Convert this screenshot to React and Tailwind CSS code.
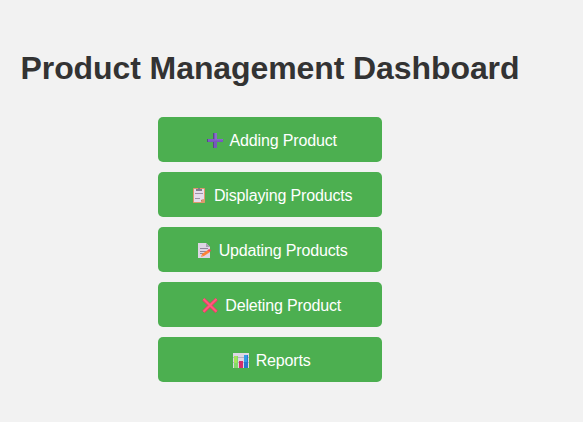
function PlusIcon() {
  return (
    <svg className="h-[15px] w-4" viewBox="0 0 16 15">
      <path d="M6 0h4v6h6v3h-6v6H6V9H0V6h6z" fill="#7659bb" />
      <path d="M8 0h2v6h6v1H8z" fill="#8a6bcb" />
      <path d="M6 0h1v6H6zM0 6h1v3H0zM6 9h1v6H6z" fill="#564b82" />
      <path d="M1 7h14" stroke="#8760cf" />
    </svg>
  );
}

function ClipboardIcon() {
  return (
    <svg className="h-[15px] w-4" viewBox="0 0 16 15">
      <rect x="2" width="12" height="15" rx=".7" fill="#df986b" />
      <path d="M3 1h10v10l-3 3H3z" fill="#e5dcec" />
      <path d="M5 1h2V0h2v1h2v2H5z" fill="#837a8c" />
      <path d="M4 5.5h8M4 10.5h5" stroke="#9b91a6" />
      <path d="M10 14v-2l3-1z" fill="#c77750" />
    </svg>
  );
}

function MemoIcon() {
  return (
    <svg className="h-[15px] w-4" viewBox="0 0 16 15">
      <path d="M2 0h8l4 4v11H2z" fill="#dfd5e5" />
      <path d="M10 0v4h4z" fill="#aaa0b3" />
      <path d="M4 5.5h8M4 8.5h7M4 10.5h4" stroke="#90869b" />
      <path d="M5 14l1-3 6-4 2 2-6 4z" fill="#ff8235" />
      <path d="M11.5 7.5L13 6l2 1-1 2z" fill="#f64459" />
      <path d="M5 14l1-2 1 1z" fill="#e6b38d" />
    </svg>
  );
}

function CrossIcon() {
  return (
    <svg className="h-[15px] w-4" viewBox="0 0 16 15">
      <path d="M1.5 1.2l13 12.6M14.5 1.2l-13 12.6" stroke="#f03a62" strokeWidth="3.4" />
      <path d="M1.5 1l13 12.6M14.5 1l-13 12.6" stroke="#ff5c82" strokeWidth="1.8" />
    </svg>
  );
}

function ChartIcon() {
  return (
    <svg className="h-[15px] w-4" viewBox="0 0 16 15">
      <path d="M0 0h16v15H0z" fill="#ded7e5" />
      <path d="M0 4.5h16M0 9.5h16" stroke="#b9afc4" />
      <path d="M1 3h4v12H1z" fill="#83d969" />
      <path d="M1 3h3v7H1z" fill="#a4e55c" />
      <path d="M6 8h4v7H6z" fill="#d52d6b" />
      <path d="M11 2h4v13h-4z" fill="#2876cf" />
      <path d="M11 2h3v7h-3z" fill="#329ce8" />
    </svg>
  );
}

const items = [
  { label: 'Adding Product', Icon: PlusIcon },
  { label: 'Displaying Products', Icon: ClipboardIcon },
  { label: 'Updating Products', Icon: MemoIcon },
  { label: 'Deleting Product', Icon: CrossIcon },
  { label: 'Reports', Icon: ChartIcon },
];

export default function App() {
  return (
    <div className="h-[422px] w-[583px] overflow-hidden bg-[#f2f2f2] font-['Liberation_Sans',Arial,sans-serif]">
      <main className="flex w-[540px] flex-col items-center pt-[50px]">
        <h1 className="text-[32px] leading-[37px] font-bold tracking-[-0.09px] whitespace-nowrap text-[#333]">Product Management Dashboard</h1>
        <nav className="mt-[30px] flex w-[224px] flex-col gap-[10px]">
          {items.map(({ label, Icon }) => (
            <button key={label} className="flex h-[45px] items-center justify-center gap-[7px] rounded-[5px] bg-[#4caf50] pt-[2px] pl-[3.4px] text-base tracking-[-0.15px] text-white">
              <Icon />
              <span>{label}</span>
            </button>
          ))}
        </nav>
      </main>
    </div>
  );
}
